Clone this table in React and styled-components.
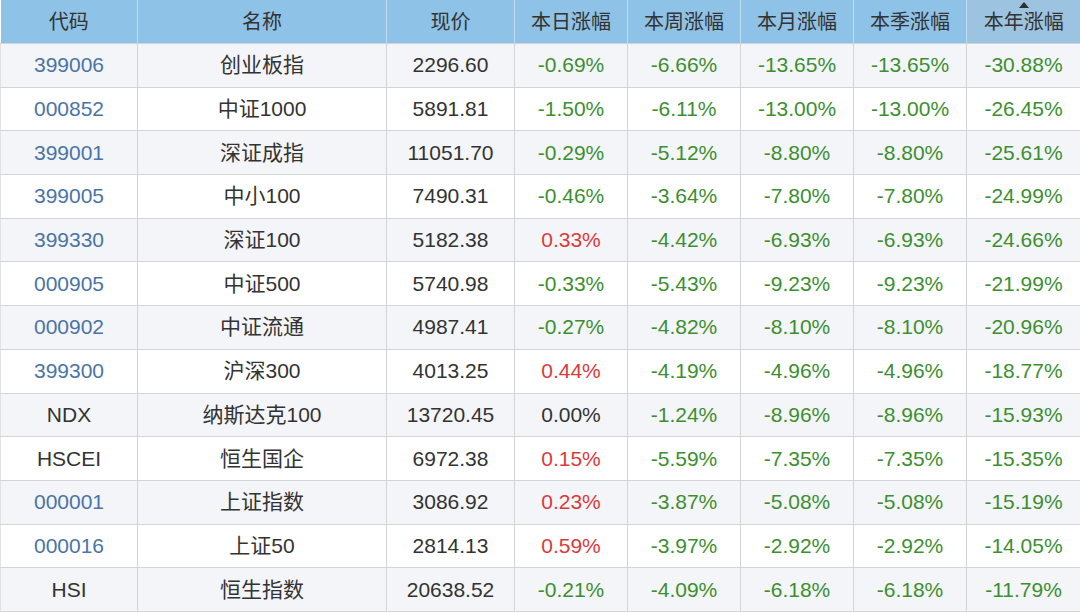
import React from "react";
import styled, { createGlobalStyle } from "styled-components";

const Global = createGlobalStyle`
  html, body { margin: 0; padding: 0; background: #ffffff; }
  body { width: 1080px; height: 612px; overflow: hidden; }
`;

const Wrap = styled.div`
  width: 1080px;
  height: 612px;
  overflow: hidden;
  font-family: "Liberation Sans", Arial, "Noto Sans CJK SC", sans-serif;
`;

const Table = styled.table`
  width: 1080px;
  border-collapse: collapse;
  table-layout: fixed;
`;

const Th = styled.th`
  height: 43px;
  padding: 0;
  background: ${(p) => (p.$sorted ? "#9cc3df" : "#8ec2e6")};
  color: #333;
  font-weight: normal;
  font-size: 20px;
  line-height: 22px;
  text-align: center;
  border-left: 1px solid #c3def1;
  border-bottom: 1px solid #c9d6df;
  position: relative;
  &:first-child { border-left: none; }
`;

const SortArrow = styled.span`
  position: absolute;
  top: 2px;
  left: 50%;
  margin-left: -5px;
  width: 0;
  height: 0;
  border-left: 5px solid transparent;
  border-right: 5px solid transparent;
  border-bottom: 6px solid #2e2e2e;
`;

const Tr = styled.tr`
  background: ${(p) => (p.$odd ? "#f4f5f9" : "#ffffff")};
`;

const Td = styled.td`
  height: 42.7px;
  padding: 0;
  font-size: 21px;
  line-height: 22px;
  text-align: center;
  color: ${(p) => p.$color || "#333"};
  border: 1px solid #d4d4d4;
  border-top: none;
  &:first-child { border-left: 1px solid #e2e2e2; }
`;

const Cjk = styled.span`
  display: inline-block;
`;

const widths = [137, 249, 128, 113, 113, 113, 113, 114];
const headers = ["代码", "名称", "现价", "本日涨幅", "本周涨幅", "本月涨幅", "本季涨幅", "本年涨幅"];

const rows = [
  ["399006", "创业板指", "2296.60", "-0.69%", "-6.66%", "-13.65%", "-13.65%", "-30.88%"],
  ["000852", "中证1000", "5891.81", "-1.50%", "-6.11%", "-13.00%", "-13.00%", "-26.45%"],
  ["399001", "深证成指", "11051.70", "-0.29%", "-5.12%", "-8.80%", "-8.80%", "-25.61%"],
  ["399005", "中小100", "7490.31", "-0.46%", "-3.64%", "-7.80%", "-7.80%", "-24.99%"],
  ["399330", "深证100", "5182.38", "0.33%", "-4.42%", "-6.93%", "-6.93%", "-24.66%"],
  ["000905", "中证500", "5740.98", "-0.33%", "-5.43%", "-9.23%", "-9.23%", "-21.99%"],
  ["000902", "中证流通", "4987.41", "-0.27%", "-4.82%", "-8.10%", "-8.10%", "-20.96%"],
  ["399300", "沪深300", "4013.25", "0.44%", "-4.19%", "-4.96%", "-4.96%", "-18.77%"],
  ["NDX", "纳斯达克100", "13720.45", "0.00%", "-1.24%", "-8.96%", "-8.96%", "-15.93%"],
  ["HSCEI", "恒生国企", "6972.38", "0.15%", "-5.59%", "-7.35%", "-7.35%", "-15.35%"],
  ["000001", "上证指数", "3086.92", "0.23%", "-3.87%", "-5.08%", "-5.08%", "-15.19%"],
  ["000016", "上证50", "2814.13", "0.59%", "-3.97%", "-2.92%", "-2.92%", "-14.05%"],
  ["HSI", "恒生指数", "20638.52", "-0.21%", "-4.09%", "-6.18%", "-6.18%", "-11.79%"],
];

const GREEN = "#3c8f2f";
const RED = "#dc3a3a";
const BLUE = "#4a74a6";
const DARK = "#333";

function pctColor(v) {
  const n = parseFloat(v);
  if (n < 0) return GREEN;
  if (n > 0) return RED;
  return DARK;
}

export default function App() {
  return (
    <Wrap>
      <Global />
      <Table>
        <colgroup>
          {widths.map((w, i) => (
            <col key={i} style={{ width: w }} />
          ))}
        </colgroup>
        <thead>
          <tr>
            {headers.map((h, i) => (
              <Th key={h} $sorted={i === 7}>
                {i === 7 && <SortArrow />}
                <Cjk>{h}</Cjk>
              </Th>
            ))}
          </tr>
        </thead>
        <tbody>
          {rows.map((r, ri) => (
            <Tr key={r[0]} $odd={ri % 2 === 0}>
              <Td $color={/^\d+$/.test(r[0]) ? BLUE : DARK}>{r[0]}</Td>
              <Td>
                <Cjk>{r[1]}</Cjk>
              </Td>
              <Td>{r[2]}</Td>
              {r.slice(3).map((v, ci) => (
                <Td key={ci} $color={pctColor(v)}>
                  {v}
                </Td>
              ))}
            </Tr>
          ))}
        </tbody>
      </Table>
    </Wrap>
  );
}
